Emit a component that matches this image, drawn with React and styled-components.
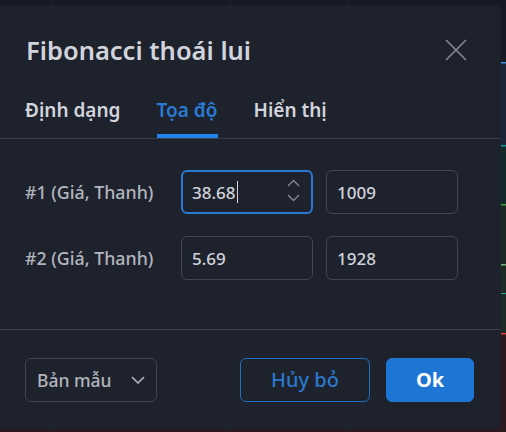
import React from "react";
import styled, { createGlobalStyle } from "styled-components";

const GlobalStyle = createGlobalStyle`
  html, body {
    margin: 0;
    padding: 0;
    background: #131722;
    overflow: hidden;
  }
  * { box-sizing: border-box; }
`;

const Stage = styled.div`
  position: relative;
  width: 506px;
  height: 432px;
  overflow: hidden;
  font-family: "Noto Sans", "DejaVu Sans", sans-serif;
`;

const ChartBack = styled.svg`
  display: block;
  width: 506px;
  height: 432px;
`;

const Dialog = styled.div`
  position: absolute;
  left: 0;
  top: 5px;
  width: 501px;
  height: 424px;
  background: #1e222d;
  border-radius: 0 7px 7px 0;
  display: flex;
  flex-direction: column;
  color: #d1d4dc;
`;

const Header = styled.div`
  display: flex;
  align-items: center;
  justify-content: space-between;
  height: 90px;
  padding: 0 33px 0 26px;
`;

const Title = styled.h1`
  margin: 0;
  font-size: 25.5px;
  font-weight: 600;
  color: #d1d4dc;
`;

const CloseButton = styled.button`
  width: 24px;
  height: 24px;
  padding: 0;
  border: 0;
  background: none;
  color: #868993;
  display: flex;
  align-items: center;
  justify-content: center;
  cursor: pointer;
`;

const Tabs = styled.div`
  display: flex;
  gap: 36px;
  padding: 0 25px;
  border-bottom: 1px solid #3a3e49;
  height: 44px;
`;

const Tab = styled.div`
  position: relative;
  display: flex;
  align-items: flex-start;
  font-size: 19px;
  font-weight: 600;
  line-height: 30px;
  color: ${(p) => (p.$active ? "#2a7ad3" : "#d1d4dc")};
  &::after {
    content: "";
    display: ${(p) => (p.$active ? "block" : "none")};
    position: absolute;
    left: 0;
    right: 0;
    bottom: 0;
    height: 4px;
    background: #2184e6;
  }
`;

const Body = styled.div`
  display: flex;
  flex-direction: column;
  gap: 22px;
  padding: 31px 0 49px 25px;
  border-bottom: 1px solid #3a3e49;
`;

const Row = styled.div`
  display: flex;
  align-items: center;
`;

const Label = styled.div`
  width: 156px;
  font-size: 17.8px;
  font-weight: 500;
  color: #b2b5be;
  white-space: nowrap;
`;

const Fields = styled.div`
  display: flex;
  gap: 13px;
`;

const Field = styled.div`
  position: relative;
  width: 132px;
  height: 44px;
  border: ${(p) => (p.$focused ? "2px solid #2a7ad3" : "1px solid #434651")};
  border-radius: 6px;
  display: flex;
  align-items: center;
  padding-left: ${(p) => (p.$focused ? "9px" : "10px")};
  font-size: 17px;
  font-weight: 500;
  color: #d1d4dc;
`;

const Caret = styled.span`
  display: inline-block;
  width: 1px;
  height: 22px;
  background: #d1d4dc;
  margin-left: 1px;
`;

const Spinner = styled.div`
  position: absolute;
  right: 11px;
  top: 7px;
  display: flex;
  flex-direction: column;
  gap: 7px;
  color: #868993;
`;

const Footer = styled.div`
  flex: 1;
  display: flex;
  align-items: center;
  padding: 0 27px 0 25px;
`;

const Select = styled.div`
  width: 132px;
  height: 44px;
  border: 1px solid #434651;
  border-radius: 6px;
  display: flex;
  align-items: center;
  justify-content: space-between;
  padding: 0 11px 0 11px;
  font-size: 17.5px;
  font-weight: 500;
  color: #b2b5be;
`;

const Actions = styled.div`
  margin-left: auto;
  display: flex;
  gap: 16px;
`;

const Button = styled.button`
  height: 44px;
  width: ${(p) => p.$width}px;
  border-radius: 6px;
  font-family: inherit;
  font-size: 20px;
  font-weight: ${(p) => (p.$primary ? 700 : 500)};
  border: 1px solid ${(p) => (p.$primary ? "#1e76d4" : "#1f6fc5")};
  background: ${(p) => (p.$primary ? "#1e76d4" : "transparent")};
  color: ${(p) => (p.$primary ? "#ffffff" : "#2a78cc")};
  cursor: pointer;
`;

const Chevron = ({ up }) => (
  <svg width="13" height="8" viewBox="0 0 13 8" fill="none">
    <path
      d={up ? "M1 7l5.5-5.5L12 7" : "M1 1l5.5 5.5L12 1"}
      stroke="currentColor"
      strokeWidth="1.4"
    />
  </svg>
);

function ChartBackground() {
  const bands = [
    { y: 0, h: 62, fill: "#161a25", line: null },
    { y: 62, h: 83, fill: "#1a2538", line: "#3d8fe0" },
    { y: 145, h: 59, fill: "#14292b", line: "#0f9d8f" },
    { y: 204, h: 60, fill: "#1a2922", line: "#43a047" },
    { y: 264, h: 69, fill: "#1e2b25", line: "#6fae7a" },
    { y: 333, h: 99, fill: "#2a1a1f", line: "#e53935" },
  ];
  return (
    <ChartBack viewBox="0 0 506 432">
      {bands.map((b) => (
        <g key={b.y}>
          <rect x="0" y={b.y} width="506" height={b.h} fill={b.fill} />
          {b.line && <rect x="0" y={b.y} width="506" height="1.5" fill={b.line} />}
        </g>
      ))}
      <rect x="501" y="293" width="5" height="1" fill="#26a69a" />
      {[52, 230, 347].map((x) => (
        <rect key={x} x={x} y="0" width="1" height="432" fill="#222632" />
      ))}
    </ChartBack>
  );
}

export default function App() {
  return (
    <>
      <GlobalStyle />
      <Stage>
        <ChartBackground />
        <Dialog>
          <Header>
            <Title>Fibonacci thoái lui</Title>
            <CloseButton aria-label="close">
              <svg width="22" height="22" viewBox="0 0 22 22" fill="none">
                <path d="M1 1l20 20M21 1L1 21" stroke="currentColor" strokeWidth="1.6" />
              </svg>
            </CloseButton>
          </Header>
          <Tabs>
            <Tab>Định dạng</Tab>
            <Tab $active>Tọa độ</Tab>
            <Tab>Hiển thị</Tab>
          </Tabs>
          <Body>
            <Row>
              <Label>#1 (Giá, Thanh)</Label>
              <Fields>
                <Field $focused>
                  38.68
                  <Caret />
                  <Spinner>
                    <Chevron up />
                    <Chevron />
                  </Spinner>
                </Field>
                <Field>1009</Field>
              </Fields>
            </Row>
            <Row>
              <Label>#2 (Giá, Thanh)</Label>
              <Fields>
                <Field>5.69</Field>
                <Field>1928</Field>
              </Fields>
            </Row>
          </Body>
          <Footer>
            <Select>
              Bản mẫu
              <svg width="14" height="8" viewBox="0 0 14 8" fill="none">
                <path d="M1 1l6 6 6-6" stroke="#b2b5be" strokeWidth="1.6" />
              </svg>
            </Select>
            <Actions>
              <Button $width={130}>Hủy bỏ</Button>
              <Button $width={88} $primary>Ok</Button>
            </Actions>
          </Footer>
        </Dialog>
      </Stage>
    </>
  );
}
